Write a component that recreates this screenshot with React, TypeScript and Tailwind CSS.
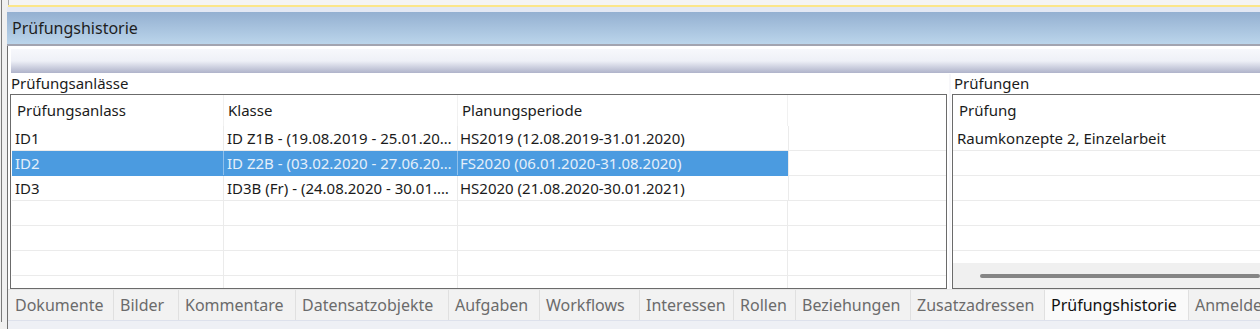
import React from 'react';

interface Row {
  anlass: string;
  klasse: string;
  periode: string;
}

const rows: Row[] = [
  { anlass: 'ID1', klasse: 'ID Z1B - (19.08.2019 - 25.01.20…', periode: 'HS2019 (12.08.2019-31.01.2020)' },
  { anlass: 'ID2', klasse: 'ID Z2B - (03.02.2020 - 27.06.20…', periode: 'FS2020 (06.01.2020-31.08.2020)' },
  { anlass: 'ID3', klasse: 'ID3B (Fr) - (24.08.2020 - 30.01.…', periode: 'HS2020 (21.08.2020-30.01.2021)' },
];

const tabs = [
  { label: 'Dokumente', w: 'w-[105px]' },
  { label: 'Bilder', w: 'w-[65px]' },
  { label: 'Kommentare', w: 'w-[117px]' },
  { label: 'Datensatzobjekte', w: 'w-[153px]' },
  { label: 'Aufgaben', w: 'w-[91px]' },
  { label: 'Workflows', w: 'w-[100px]' },
  { label: 'Interessen', w: 'w-[94px]' },
  { label: 'Rollen', w: 'w-[62px]' },
  { label: 'Beziehungen', w: 'w-[115px]' },
  { label: 'Zusatzadressen', w: 'w-[134px]' },
  { label: 'Prüfungshistorie', w: 'w-[144px]', active: true },
  { label: 'Anmelde', w: 'w-[120px]' },
];

function LeftTable() {
  const empty = [0, 1, 2, 3];
  return (
    <div className="h-[195px] border border-[#6b6b6b] bg-white pl-[1px] overflow-hidden">
      {/* header */}
      <div className="flex h-[31px] items-center text-[#1b1b1b]">
        <div className="w-[212px] h-full flex items-center pl-[5px] border-r border-[#f1f1f1]">Prüfungsanlass</div>
        <div className="w-[234px] h-full flex items-center pl-[4px] border-r border-[#f1f1f1]">Klasse</div>
        <div className="w-[330px] h-full flex items-center pl-[4px] border-r border-[#f1f1f1]">Planungsperiode</div>
        <div className="flex-1" />
      </div>
      {rows.map((r, i) => {
        const sel = i === 1;
        return (
          <div key={r.anlass} className="flex h-[25px]">
            <div className={`flex w-[776px] border-b ${sel ? 'bg-[#4b9be0] text-[#e4effa] border-[#4b9be0]' : 'text-[#1b1b1b] border-[#ebebeb]'}`}>
              <div className={`w-[212px] pl-[3px] leading-[24px] whitespace-nowrap overflow-hidden border-r ${sel ? 'border-[#8fc0ec]' : 'border-[#ebebeb]'}`}>{r.anlass}</div>
              <div className={`w-[234px] pl-[3px] leading-[24px] whitespace-nowrap overflow-hidden border-r ${sel ? 'border-[#8fc0ec]' : 'border-[#ebebeb]'}`}>{r.klasse}</div>
              <div className="w-[330px] pl-[2px] leading-[24px] whitespace-nowrap overflow-hidden">{r.periode}</div>
            </div>
            <div className="flex-1 border-b border-l border-[#ebebeb]" />
          </div>
        );
      })}
      {empty.map((e) => (
        <div key={e} className="flex h-[25px] border-b border-[#ebebeb]">
          <div className="w-[212px] border-r border-[#ebebeb]" />
          <div className="w-[234px] border-r border-[#ebebeb]" />
          <div className="w-[330px] border-r border-[#ebebeb]" />
          <div className="flex-1" />
        </div>
      ))}
    </div>
  );
}

function RightTable() {
  return (
    <div className="h-[195px] border-t border-l border-b border-[#6b6b6b] bg-white flex flex-col overflow-hidden">
      <div className="h-[31px] flex items-center pl-[6px] text-[#1b1b1b]">Prüfung</div>
      <div className="flex-1 overflow-hidden">
        <div className="h-[25px] border-b border-[#ebebeb] pl-[4px] leading-[24px] text-[#1b1b1b] whitespace-nowrap">
          Raumkonzepte 2, Einzelarbeit
        </div>
        <div className="h-[25px] border-b border-[#ebebeb]" />
        <div className="h-[25px] border-b border-[#ebebeb]" />
        <div className="h-[25px] border-b border-[#ebebeb]" />
        <div className="h-[25px] border-b border-[#ebebeb]" />
      </div>
      {/* horizontal scrollbar */}
      <div className="h-[25px] bg-[#f0f0f0] flex items-center pl-[27px]">
        <div className="h-[4px] w-[400px] rounded-full bg-[#858585]" />
      </div>
    </div>
  );
}

export default function App() {
  return (
    <div className="flex h-[329px] w-[1260px] overflow-hidden bg-[#f0f0f0] text-[15px] font-['Segoe_UI','Noto_Sans',sans-serif]">
      <div className="w-[1px] shrink-0" />
      <div className="w-[1px] shrink-0 bg-[#7a7a7a] h-[322px]" />
      <div className="w-[5px] shrink-0" />
      <div className="flex-1 flex flex-col min-w-0">
        {/* cut-off input above */}
        <div className="h-[5px] ml-[1px] border-l border-[#a8a8a8] bg-[#f4f4f4]" />
        <div className="h-[2px] ml-[1px] bg-[#fbe68a]" />
        <div className="h-[5px] bg-[#e3e8f4]" />

        {/* section header */}
        <div className="h-[32px] flex items-center pl-[5px] bg-linear-to-b from-[#94b0d1] to-[#bbd5eb] text-[16px] text-[#1e1e1e]">
          Prüfungshistorie
        </div>
        <div className="h-[2px] bg-[#a2a4b0]" />

        <div className="flex-1 flex flex-col border-l border-[#6f6f6f]">
          {/* main panel */}
          <div className="h-[243px] bg-white flex flex-col">
            <div className="h-[3px]" />
            <div className="h-[24px] ml-[3px] bg-linear-to-b from-[#f7f8fc] via-[#eef0f7] to-[#afb3ca]" />
            <div className="flex flex-1 pl-[2px]">
              <div className="w-[937px] shrink-0 flex flex-col">
                <div className="h-[21px] pl-[1px] leading-[20px] text-[#1b1b1b]">Prüfungsanlässe</div>
                <LeftTable />
              </div>
              <div className="w-[5px] shrink-0 flex justify-center pt-[1px]">
                <div className="w-[2px] h-full bg-[#f7f7fa]" />
              </div>
              <div className="flex-1 min-w-0 flex flex-col">
                <div className="h-[21px] pl-[2px] leading-[20px] text-[#1b1b1b]">Prüfungen</div>
                <RightTable />
              </div>
            </div>
          </div>

          {/* tab strip */}
          <div className="h-[31px] flex pl-[1px] bg-[#f0f0f0] border-t border-[#e6e6e6] text-[16px]">
            {tabs.map((t) => (
              <div
                key={t.label}
                className={`${t.w} shrink-0 h-full flex items-center pl-[6px] whitespace-nowrap overflow-hidden border-r border-[#e0e0e0] ${
                  t.active ? 'bg-[#fafafa] text-[#111111]' : 'bg-[#f2f2f2] text-[#6b6b6b]'
                }`}
              >
                {t.label}
              </div>
            ))}
          </div>
          <div className="h-[1px] bg-[#dde1ec]" />
          <div className="flex-1 bg-[#eef0f5]" />
        </div>
      </div>
    </div>
  );
}
